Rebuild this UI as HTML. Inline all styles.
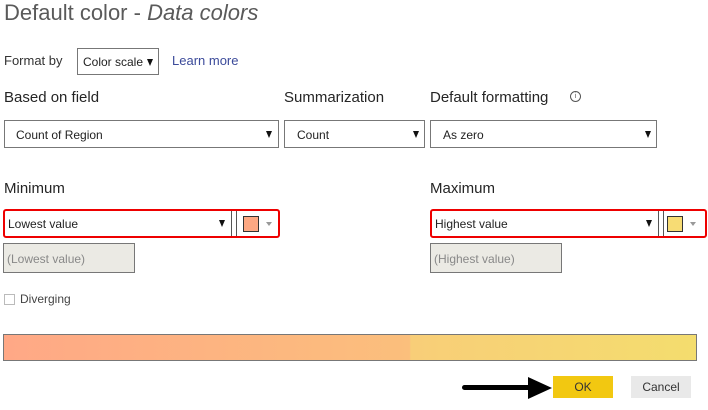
<!DOCTYPE html>
<html><head><style>
body{margin:0;width:708px;height:410px;background:#fff;font-family:"Liberation Sans",sans-serif;position:relative;overflow:hidden;color:#222}
.a{position:absolute;white-space:nowrap}
.dd{position:absolute;border:1px solid #777;box-sizing:border-box;font-size:12px;color:#222}
.dd span{position:absolute;top:7px}
.tri{position:absolute;width:0;height:0;border-left:3.5px solid transparent;border-right:3.5px solid transparent;border-top:7px solid #111}
.lab{font-size:15px;color:#252525}
</style></head><body>
<div class="a" style="left:4px;top:0px;font-size:22px;color:#5a5a5a;font-weight:300">Default color - <i>Data colors</i></div>
<div class="a" style="left:4px;top:53px;font-size:13px;color:#333">Format by</div>
<div class="dd" style="left:77px;top:48px;width:82px;height:27px"><span style="left:5px;top:6px">Color scale</span><div class="tri" style="left:69px;top:10px"></div></div>
<div class="a" style="left:172px;top:53px;font-size:13px;color:#3b4a9a">Learn more</div>
<div class="a lab" style="left:4px;top:89px">Based on field</div>
<div class="a lab" style="left:284px;top:89px">Summarization</div>
<div class="a lab" style="left:430px;top:89px">Default formatting</div>
<div class="a" style="left:570px;top:91px;width:9px;height:9px;border:1px solid #555;border-radius:50%;font-size:7px;text-align:center;line-height:9px;color:#555">i</div>
<div class="dd" style="left:4px;top:120px;width:275px;height:28px"><span style="left:11px">Count of Region</span><div class="tri" style="left:261px;top:10px"></div></div>
<div class="dd" style="left:284px;top:120px;width:141px;height:28px"><span style="left:12px">Count</span><div class="tri" style="left:128px;top:10px"></div></div>
<div class="dd" style="left:430px;top:120px;width:227px;height:28px"><span style="left:12px">As zero</span><div class="tri" style="left:214px;top:10px"></div></div>
<div class="a lab" style="left:4px;top:180px">Minimum</div>
<div class="a lab" style="left:430px;top:180px">Maximum</div>

<div class="dd" style="left:3px;top:209px;width:277px;height:29px;border:2px solid #e00;border-radius:3px">
<span style="left:3px;top:6px">Lowest value</span><div class="tri" style="left:214px;top:9px"></div>
<div class="a" style="left:226px;top:0;width:1px;height:25px;background:#555"></div>
<div class="a" style="left:231px;top:0;width:1px;height:25px;background:#555"></div>
<div class="a" style="left:238px;top:5px;width:14px;height:14px;background:#fda883;border:1px solid #333"></div>
<div class="a" style="left:261px;top:11px;border-left:3.5px solid transparent;border-right:3.5px solid transparent;border-top:4px solid #999"></div>
</div>
<div class="dd" style="left:3px;top:243px;width:132px;height:30px;background:#ebeae4;border-color:#777"><span style="left:3px;top:8px;color:#888">(Lowest value)</span></div>

<div class="dd" style="left:430px;top:209px;width:277px;height:29px;border:2px solid #e00;border-radius:3px">
<span style="left:3px;top:6px">Highest value</span><div class="tri" style="left:214px;top:9px"></div>
<div class="a" style="left:226px;top:0;width:1px;height:25px;background:#555"></div>
<div class="a" style="left:231px;top:0;width:1px;height:25px;background:#555"></div>
<div class="a" style="left:235px;top:5px;width:14px;height:14px;background:#f7dc74;border:1px solid #333"></div>
<div class="a" style="left:258px;top:11px;border-left:3.5px solid transparent;border-right:3.5px solid transparent;border-top:4px solid #999"></div>
</div>
<div class="dd" style="left:430px;top:243px;width:132px;height:30px;background:#ebeae4;border-color:#777"><span style="left:3px;top:8px;color:#888">(Highest value)</span></div>

<div class="a" style="left:4px;top:294px;width:9px;height:9px;border:1px solid #bbb"></div>
<div class="a" style="left:20px;top:292px;font-size:12px;color:#444">Diverging</div>

<div class="a" style="left:3px;top:334px;width:692px;height:25px;border:1px solid #777;background:linear-gradient(to right,#ffa886 0%,#fbbf7c 58.6%,#f8ce78 58.8%,#f4dd6e 100%)"></div>

<div class="a" style="left:462px;top:385px;width:70px;height:5px;background:#000;border-radius:3px"></div>
<div class="a" style="left:528px;top:377px;border-top:11px solid transparent;border-bottom:11px solid transparent;border-left:24px solid #000"></div>
<div class="a" style="left:553px;top:376px;width:60px;height:22px;background:#f2c811;font-size:12px;text-align:center;line-height:22px;color:#333">OK</div>
<div class="a" style="left:631px;top:376px;width:60px;height:22px;background:#e9e9e9;font-size:12px;text-align:center;line-height:22px;color:#333">Cancel</div>
</body></html>
